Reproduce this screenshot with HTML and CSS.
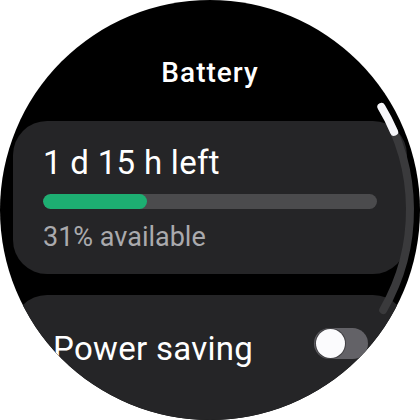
FILE: index.html
```html
<!DOCTYPE html>
<html>
<head>
<meta charset="utf-8">
<link rel="stylesheet" href="styles.css">
</head>
<body>
<div class="screen">
  <h1 class="title">Battery</h1>
  <div class="card usage">
    <div class="left-text">1 d 15 h left</div>
    <div class="bar"><div class="fill" style="width:31%"></div></div>
    <div class="sub">31% available</div>
  </div>
  <div class="card power">
    <div class="label">Power saving</div>
    <div class="toggle"><div class="thumb"></div></div>
  </div>
  <svg class="scroll" width="420" height="420" viewBox="0 0 420 420">
    <path d="M381.4 107 A200 200 0 0 1 383.2 310" fill="none" stroke="#3a3a3c" stroke-width="8" stroke-linecap="round"/>
    <path d="M381.4 107 A200 200 0 0 1 394.1 131.9" fill="none" stroke="#f6f6fa" stroke-width="8" stroke-linecap="round"/>
  </svg>
</div>
</body>
</html>
```
FILE: styles.css
```css
html, body {
  margin: 0;
  padding: 0;
  background: #ffffff;
}
.screen {
  position: relative;
  width: 420px;
  height: 420px;
  border-radius: 50%;
  overflow: hidden;
  background: #000000;
  font-family: Roboto, "Liberation Sans", sans-serif;
  color: #ffffff;
  display: flex;
  flex-direction: column;
}
.title {
  flex-shrink: 0;
  margin: 53px 0 0 0;
  height: 40px;
  font-size: 28px;
  line-height: 40px;
  font-weight: 500;
  text-align: center;
  letter-spacing: 1px;
}
.card {
  flex-shrink: 0;
  margin: 0 13px;
  background: #252527;
  border-radius: 34px;
}
.usage {
  margin-top: 28px;
  height: 153px;
  box-sizing: border-box;
  padding: 22px 30px 0 30px;
  display: flex;
  flex-direction: column;
}
.left-text {
  font-size: 33px;
  line-height: 40px;
  letter-spacing: 0.3px;
}
.bar {
  margin-top: 11px;
  height: 15px;
  border-radius: 8px;
  background: #4b4b4d;
  overflow: hidden;
}
.fill {
  height: 100%;
  background: #1daf72;
  border-radius: 8px;
}
.sub {
  margin-top: 11px;
  font-size: 27px;
  line-height: 34px;
  color: #aaaaad;
}
.power {
  margin-top: 21px;
  height: 140px;
  box-sizing: border-box;
  padding: 29px 0 0 40px;
  display: flex;
  align-items: flex-start;
}
.label {
  font-size: 33px;
  line-height: 40px;
  flex: 1;
  margin-top: 5px;
  letter-spacing: 0.3px;
}
.toggle {
  width: 54px;
  height: 31px;
  border-radius: 16px;
  background: #636267;
  margin: 4px 39px 0 0;
  display: flex;
  align-items: center;
  padding-left: 2px;
  box-sizing: border-box;
}
.thumb {
  width: 29px;
  height: 29px;
  border-radius: 50%;
  background: #fbfbfd;
  box-shadow: 0 0 0 1px rgba(0,0,0,0.35);
}
.scroll {
  position: absolute;
  left: 0;
  top: 0;
}
```
